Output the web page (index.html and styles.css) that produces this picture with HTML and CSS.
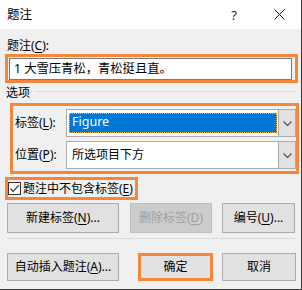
FILE: index.html
```html
<!DOCTYPE html>
<html lang="zh-CN">
<head>
<meta charset="utf-8">
<title>题注</title>
<link rel="stylesheet" href="styles.css">
</head>
<body>
<div class="win">
  <div class="titlebar">
    <span class="title">题注</span>
    <span class="help">?</span>
    <svg class="close" width="11" height="11" viewBox="0 0 11 11"><path d="M0.5 0.5 L10.5 10.5 M10.5 0.5 L0.5 10.5" stroke="#111" stroke-width="1" fill="none"/></svg>
  </div>
  <div class="body">
    <div class="lbl">题注(<u>C</u>):</div>
    <div class="hl hl-input">
      <div class="input">1 大雪压青松，青松挺且直。</div>
    </div>
    <div class="group-head"><span class="gtitle">选项</span><span class="rule"></span></div>
    <div class="hl hl-opts">
      <div class="row">
        <span class="rlbl">标签(<u>L</u>):</span>
        <div class="combo">
          <div class="val"><span class="sel">Figure</span></div>
          <div class="drop"><svg width="9" height="5" viewBox="0 0 9 5"><path d="M0.5 0.5 L4.5 4.5 L8.5 0.5" stroke="#555" stroke-width="1.2" fill="none"/></svg></div>
        </div>
      </div>
      <div class="row">
        <span class="rlbl">位置(<u>P</u>):</span>
        <div class="combo">
          <div class="val"><span class="txt">所选项目下方</span></div>
          <div class="drop"><svg width="9" height="5" viewBox="0 0 9 5"><path d="M0.5 0.5 L4.5 4.5 L8.5 0.5" stroke="#555" stroke-width="1.2" fill="none"/></svg></div>
        </div>
      </div>
    </div>
    <div class="hl hl-check">
      <span class="cb"><svg width="11" height="11" viewBox="0 0 11 11"><path d="M1.5 5.5 L4.2 8.3 L9.8 2.2" stroke="#333" stroke-width="1.2" fill="none"/></svg></span>
      <span class="cbt">题注中不包含标签(<u>E</u>)</span>
    </div>
    <div class="btnrow r1">
      <div class="btn w-new">新建标签(<u>N</u>)...</div>
      <div class="btn disabled w-del">删除标签(<u>D</u>)</div>
      <div class="btn w-num">编号(<u>U</u>)...</div>
    </div>
    <div class="sep"></div>
    <div class="btnrow r2">
      <div class="btn w-new">自动插入题注(<u>A</u>)...</div>
      <div class="btn ok">确定</div>
      <div class="btn w-cancel">取消</div>
    </div>
  </div>
</div>
</body>
</html>
```

FILE: styles.css
```css
* { box-sizing: border-box; }
html, body { margin: 0; padding: 0; }
body {
  font-family: "Noto Sans", "Noto Sans CJK SC", sans-serif;
  font-size: 12px;
  color: #000;
  background: #f0f0f0;
}
u { text-decoration: underline; text-underline-offset: 2px; }
.win {
  width: 302px;
  height: 290px;
  border-right: 1px solid #3a3a3a;
  border-bottom: 1px solid #3a3a3a;
  display: flex;
  flex-direction: column;
  background: #f0f0f0;
}
.titlebar {
  height: 29px;
  background: #fff;
  display: flex;
  align-items: center;
  padding-left: 7px;
  flex: none;
}
.title { font-size: 12.5px; line-height: 16px; }
.help { margin-left: auto; font-size: 13px; line-height: 16px; color: #222; font-family: "Noto Sans", sans-serif; }
.close { margin-left: 37px; margin-right: 16px; }
.body {
  flex: 1;
  padding: 8px 3px 0 5px;
  display: flex;
  flex-direction: column;
}
.lbl { height: 17px; line-height: 17px; padding-left: 2px; }
.hl { border: 3px solid #f5863a; }
.hl-input { padding: 1px 3px 0 1px; }
.input {
  height: 22px;
  border: 1px solid #7a7a7a;
  background: #fff;
  line-height: 20px;
  padding-left: 4px;
  font-size: 12.3px;
}
.group-head { height: 20px; display: flex; align-items: flex-start; }
.gtitle { line-height: 16px; margin-top: 2px; padding-left: 1px; }
.rule { flex: 1; height: 1px; background: #dcdcdc; margin-top: 8px; margin-left: 4px; margin-right: 2px; }
.hl-opts { margin-left: 5px; margin-right: -1px; padding: 3px 0 2px 2px; display: flex; flex-direction: column; gap: 4px; }
.row { display: flex; align-items: center; height: 28px; }
.rlbl { width: 51px; flex: none; line-height: 16px; }
.combo { flex: 1; height: 28px; border: 1px solid #adadad; background: #fff; display: flex; }
.val { flex: 1; padding: 3px 1px 3px 2px; display: flex; }
.sel {
  flex: 1;
  background: #0078d7;
  color: #fff;
  border: 1px dotted #f0b050;
  padding-left: 2px;
  line-height: 15px;
  font-size: 12.5px;
}
.txt { line-height: 20px; padding-left: 3px; }
.drop {
  width: 17px;
  background: #e1e1e1;
  border-left: 1px solid #adadad;
  display: flex;
  align-items: center;
  justify-content: center;
}
.hl-check { margin-top: 3px; width: 133px; height: 23px; display: flex; align-items: center; padding-left: 0; }
.cb {
  width: 13px; height: 13px; border: 1px solid #333; background: #fff;
  display: flex; align-items: center; justify-content: center; flex: none;
}
.cbt { margin-left: 2px; line-height: 16px; white-space: nowrap; }
.btnrow { display: flex; padding-left: 2px; }
.r1 { margin-top: 3px; height: 30px; }
.r2 { margin-top: 14px; height: 28px; }
.btn {
  height: 100%;
  border: 1px solid #adadad;
  background: #e1e1e1;
  display: flex;
  align-items: center;
  justify-content: center;
  line-height: 16px;
  white-space: nowrap;
}
.w-new { width: 112px; }
.w-del { width: 82px; margin-left: 11px; }
.w-num { width: 73px; margin-left: 10px; }
.disabled { background: #cccccc; border-color: #bfbfbf; color: #a0a0a0; }
.ok { width: 75px; margin-left: 19px; border: 3px solid #f5863a; }
.w-cancel { width: 74px; margin-left: 9px; }
.sep { height: 1px; background: #dadada; margin: 5px 2px 0 2px; }
```
